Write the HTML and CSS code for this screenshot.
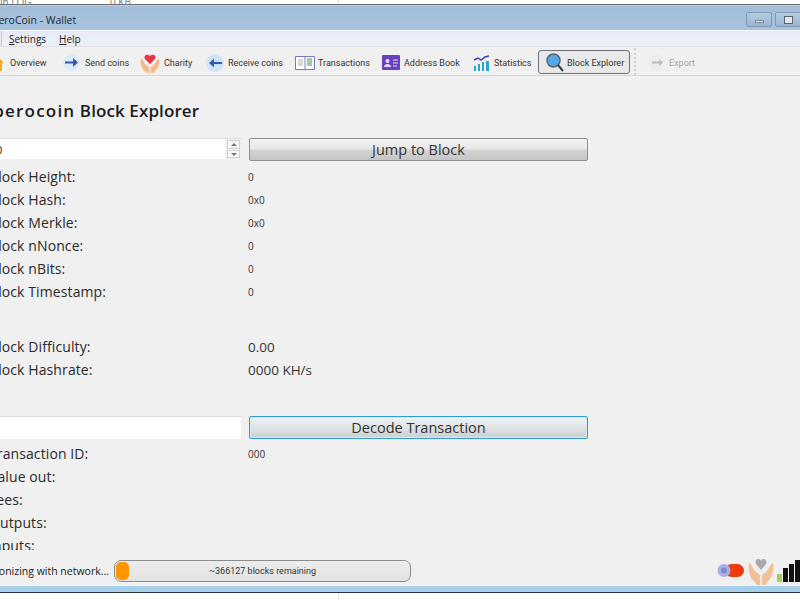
FILE: index.html
```html
<!DOCTYPE html>
<html lang="en">
<head>
<meta charset="utf-8">
<title>Wallet</title>
<link rel="stylesheet" href="styles.css">
</head>
<body>
<div class="desktop">
  <div class="back-strip"><span class="back-name">in LOG</span><span class="back-size">0 KB</span></div>
  <div class="window">
    <div class="titlebar">
      <span class="title">HyperoCoin - Wallet</span>
      <div class="winbtns">
        <span class="winbtn"><i class="min-glyph"></i></span>
        <span class="winbtn"><i class="max-glyph"></i></span>
      </div>
    </div>
    <div class="menubar">
      <span class="menu-file">File</span>
      <span class="menu-item"><u>S</u>ettings</span>
      <span class="menu-item"><u>H</u>elp</span>
    </div>
    <div class="toolbar">
      <span class="tool tool-overview">
        <svg class="ico" width="18" height="20" viewBox="0 0 18 20"><path d="M9 2 17 10h-2v8H3v-8H1z" fill="#f5a623"/><rect x="7" y="12" width="4" height="6" fill="#fbd38a"/></svg>
        Overview</span>
      <span class="tool tool-send">
        <svg class="ico" width="17" height="17" viewBox="0 0 17 17"><circle cx="8.5" cy="8.5" r="8.5" fill="#dcebf8"/><path d="M2 7.5h8V4l5 4.5-5 4.5V9.500H2z" fill="#3c55b5"/></svg>
        Send coins</span>
      <span class="tool tool-charity">
        <svg class="ico" width="20" height="22" viewBox="0 0 20 22"><path d="M10 12 5 7c-2-3 2-6 5-3 3-3 7 0 5 3z" fill="#e8344a"/><path d="M1 7c2 0 3 3 4 5l5 4 5-4c1-2 2-5 4-5 1 4 0 8-3 11l-3 3H7l-3-3C1 15 0 11 1 7z" fill="#f2b98c"/><path d="M10 16v5" stroke="#fff" stroke-width="1"/></svg>
        Charity</span>
      <span class="tool tool-receive">
        <svg class="ico" width="18" height="18" viewBox="0 0 18 18"><circle cx="9" cy="9" r="9" fill="#cfe5f8"/><path d="M16 8H8V4.500L3 9l5 4.500V10h8z" fill="#3c55b5"/></svg>
        Receive coins</span>
      <span class="tool tool-trans">
        <svg class="ico" width="20" height="16" viewBox="0 0 20 16"><path d="M.5 1.500h19v13H.5z" fill="#fff" stroke="#7a78c0"/><path d="M10 1.500v13" stroke="#7a78c0"/><rect x="3" y="4" width="5" height="7" fill="#d8d8d8"/><rect x="12" y="3" width="5" height="8" fill="#a5c9a0"/></svg>
        Transactions</span>
      <span class="tool tool-address">
        <svg class="ico" width="18" height="15" viewBox="0 0 18 15"><rect width="18" height="15" y="0" rx="1" fill="#6a3fc0"/><circle cx="5.500" cy="6" r="2" fill="#e5dcf5"/><path d="M2 12c0-4 7-4 7 0z" fill="#e5dcf5"/><path d="M11 5h5M11 8h5M11 11h4" stroke="#e5dcf5"/></svg>
        Address Book</span>
      <span class="tool tool-stats">
        <svg class="ico" width="17" height="17" viewBox="0 0 17 17"><path d="M1 6 5 4l3 2 4-3 4-1" fill="none" stroke="#3d3fa8" stroke-width="1.500"/><path d="M1 12h2v5H1zM5 10h2v7H5zM9 8h2v9H9zM13 7h3v10h-3z" fill="#2fa6c8"/></svg>
        Statistics</span>
      <span class="tool tool-active">
        <svg class="ico" width="18" height="19" viewBox="0 0 18 19"><circle cx="7.500" cy="7.500" r="6.500" fill="#52a8e8" stroke="#5b6670" stroke-width="1.500"/><path d="m12 12 5 6" stroke="#3a3f46" stroke-width="2"/></svg>
        Block Explorer</span>
      <span class="tool-sep"></span>
      <span class="tool tool-export">
        <svg class="ico" width="17" height="17" viewBox="0 0 17 17"><circle cx="8" cy="8.500" r="8" fill="#ececec"/><path d="M3 7.500h7V5l4 3.500-4 3.500V9.500H3z" fill="#bdbdbd"/></svg>
        Export</span>
    </div>
    <main class="content">
      <h1 class="heading"><span class="heading-coin">Hyperocoin</span> Block Explorer</h1>
      <div class="field-row">
        <div class="spinbox">
          <span class="spin-value">0</span>
          <span class="spin-arrows"><i class="arrow-up"></i><i class="arrow-down"></i></span>
        </div>
        <button class="btn">Jump to Block</button>
      </div>
      <div class="info info-block">
        <span class="lbl">Block Height:</span><span class="val">0</span>
        <span class="lbl">Block Hash:</span><span class="val">0x0</span>
        <span class="lbl">Block Merkle:</span><span class="val">0x0</span>
        <span class="lbl">Block nNonce:</span><span class="val">0</span>
        <span class="lbl">Block nBits:</span><span class="val">0</span>
        <span class="lbl">Block Timestamp:</span><span class="val">0</span>
      </div>
      <div class="info info-rate">
        <span class="lbl">Block Difficulty:</span><span class="val val-big">0.00</span>
        <span class="lbl">Block Hashrate:</span><span class="val val-big">0000 KH/s</span>
      </div>
      <div class="field-row">
        <div class="txinput"></div>
        <button class="btn btn-focus">Decode Transaction</button>
      </div>
      <div class="info">
        <span class="lbl">Transaction ID:</span><span class="val">000</span>
        <span class="lbl">Value out:</span><span class="val"></span>
        <span class="lbl">Fees:</span><span class="val"></span>
        <span class="lbl">Outputs:</span><span class="val"></span>
        <span class="lbl">Inputs:</span><span class="val"></span>
      </div>
    </main>
    <div class="statusbar">
      <span class="sync">Synchronizing with network...</span>
      <div class="progress"><i class="chunk"></i><span class="progress-text">~366127 blocks remaining</span></div>
      <div class="tray">
        <svg width="27" height="13" viewBox="0 0 27 13"><rect x="8" width="19" height="13" rx="6.500" fill="#f03a0c"/><circle cx="7" cy="6.500" r="6.500" fill="#a9aee6"/><circle cx="7" cy="6.500" r="3" fill="#8087d0"/></svg>
        <svg width="26" height="28" viewBox="0 0 26 28"><path d="M13 13 8 7C6 3 11 0 13 4c2-4 7-1 5 3z" fill="#a9a9a9"/><path d="M1 6c3 1 4 6 6 8l5 4v10H9l-5-6C1 18 0 11 1 6zM25 6c-3 1-4 6-6 8l-5 4v10h3l5-6c3-4 4-11 3-16z" fill="#f4c097"/></svg>
        <svg class="signal" width="23" height="22" viewBox="0 0 23 22"><path d="M0 14h5v8H0z" fill="#9ed05e"/><path d="M6 8h5v14H6zM12 4h5v18h-5zM18 0h5v22h-5z" fill="#111"/></svg>
      </div>
    </div>
  </div>
  <div class="bottom-strip"></div>
</div>
</body>
</html>
```
FILE: styles.css
```css
* { box-sizing: border-box; }
html, body { margin: 0; height: 100%; overflow: hidden; background: #fff; }
body { font-family: "Open Sans", "Liberation Sans", sans-serif; color: #222; }

.desktop { width: 800px; height: 600px; overflow: hidden; display: flex; flex-direction: column; }

.back-strip {
  height: 4px; flex: none; overflow: hidden; display: flex; background: #fff;
  font-size: 10px; line-height: 4px; color: #777;
}
.back-name { width: 110px; }
.back-size { width: 229px; border-right: 1px solid #e4e4e4; }

.window {
  flex: none; width: 860px; height: 582px; margin-left: -20px;
  display: flex; flex-direction: column;
  border-top: 1px solid #6e6e6e;
  background: #f0f0f0;
}

.titlebar {
  height: 25px; flex: none; display: flex; align-items: center; justify-content: space-between;
  background: linear-gradient(#a3bed8, #a9c3de);
  border-top: 1px solid #c8ccd2;
}
.title { font-size: 10.500px; color: #1e2a38; margin-top: 4px; margin-left: -1px; }
.winbtns { display: flex; gap: 3px; margin-right: 39px; margin-top: 3px; }
.winbtn {
  width: 26px; height: 15px; border: 1px solid #7f99b4; border-radius: 2px;
  background: linear-gradient(#b4cbe1, #9cb6d0);
  display: flex; align-items: center; justify-content: center;
}
.min-glyph { width: 9px; height: 3px; margin-top: 3px; background: #dfe6ee; border: 1px solid #7d8791; }
.max-glyph { width: 9px; height: 8px; background: #dfe6ee; border: 1px solid #59636e; }

.menubar {
  height: 17px; flex: none; display: flex; align-items: center; font-size: 10px; color: #222;
  border-top: 1px solid #f4f7fc;
  background: linear-gradient(#e8ebf7, #eeeff5);
  border-bottom: 1px solid #dedfe4;
}
.menu-file { width: 22px; height: 15px; color: transparent; background: #e8e8e8; border-right: 1px solid #c8c8d0; margin-right: 7px; }
.menu-item { margin-right: 13px; }

.toolbar {
  height: 29px; flex: none; display: flex; align-items: center;
  font-family: Roboto, "Liberation Sans", sans-serif; font-size: 9px; color: #333;
  background: #f0f0f0; border-bottom: 1px solid #d6d6d6;
}
.tool { display: flex; align-items: center; gap: 5px; height: 24px; margin-top: 1px; padding-top: 2px; white-space: nowrap; }
.ico { flex: none; }
.tool-overview { margin-left: 7px; width: 76px; }
.tool-send { width: 77px; }
.tool-charity { width: 66px; gap: 4px; }
.tool-receive { width: 89px; gap: 4px; }
.tool-trans { width: 87px; gap: 3px; }
.tool-address { width: 91px; gap: 4px; }
.tool-stats { width: 65px; gap: 4px; }
.tool-active {
  width: 92px; padding-left: 7px; gap: 3px; border: 1px solid #6f7478; border-radius: 3px;
  background: #e9e9e9; box-shadow: inset 0 0 1px #bbb;
}
.tool-sep { width: 3px; height: 27px; margin: 0 12px 0 4px; border-left: 2px dotted #cfcfcf; }
.tool-export { color: #a6a6a6; gap: 3px; }

.content {
  flex: 1 1 0; min-height: 0; overflow: hidden; padding: 25px 0 0 9px; display: flex; flex-direction: column;
}
.heading { margin: 0 0 17px -20px; font-size: 17px; line-height: 20px; font-weight: 600; color: #1b1b1b; letter-spacing: .1px; white-space: nowrap; }
.heading-coin { letter-spacing: 1.2px; }
.field-row { display: flex; align-items: flex-start; margin-left: -9px; height: 23px; gap: 8px; flex: none; }
.spinbox {
  width: 261px; height: 21px; display: flex; align-items: center; justify-content: space-between;
  background: linear-gradient(90deg, #fff 245px, #f0f0f0 245px);
  border-top: 1px solid #dcdcdc; font-size: 11px; padding-left: 16px;
}
.spin-arrows { width: 13px; height: 18px; margin-right: 1px; display: flex; flex-direction: column; gap: 1px; }
.spin-arrows i { flex: 1; background: #f8f8f8; border: 1px solid #d0d0d0; position: relative; }
.arrow-up::after, .arrow-down::after {
  content: ""; position: absolute; left: 3px; top: 2px; border: 3px solid transparent;
}
.arrow-up::after { border-bottom-color: #777; border-top: 0; }
.arrow-down::after { border-top-color: #777; border-bottom: 0; }
.btn {
  width: 339px; height: 23px; padding: 0; font: inherit; font-size: 14.500px; color: #333;
  border: 1px solid #8e8e8e; border-radius: 2px;
  background: linear-gradient(#f2f2f2 0%, #e8e8e8 45%, #d2d2d2 55%, #c6c6c6 100%);
}
.btn-focus { border-color: #2f9bd0; box-shadow: inset 0 0 0 1px #d5ecf5; background: linear-gradient(#edf3f6, #dfe3e5 50%, #cbcfd2); }

.info {
  display: grid; grid-template-columns: 259px 1fr; grid-auto-rows: 23px; align-items: center;
  font-size: 14px; color: #2a2a2a; margin-top: 3px; flex: none;
}
.info-block { margin-top: 4px; }
.lbl { letter-spacing: .1px; white-space: nowrap; }
.info-rate { margin-top: 32px; margin-bottom: 35px; }
.val { font-size: 10px; color: #333; }
.val-big { font-size: 13.500px; }
.txinput { width: 261px; height: 23px; background: #fff; border-top: 1px solid #d8d8d8; }

.statusbar {
  height: 36px; padding-top: 5px; flex: none; display: flex; align-items: center; background: #f0f0f0; font-size: 10.500px;
}
.sync { width: 134px; padding-right: 5px; display: flex; justify-content: flex-end; white-space: nowrap; color: #222; flex: none; }
.progress {
  position: relative; width: 297px; height: 22px; flex: none; border: 1px solid #8c8c8c; border-radius: 7px;
  background: linear-gradient(#ececec, #e2e2e2); display: flex; align-items: center; justify-content: center;
  font-family: Roboto, "Liberation Sans", sans-serif; font-size: 9px; color: #333;
}
.chunk { position: absolute; left: 1px; top: 1px; bottom: 1px; width: 13px; border-radius: 5px; background: #ff9600; }
.tray { margin-left: 306px; display: flex; align-items: center; gap: 4px; flex: none; }
.signal { margin-left: -1px; }

.bottom-strip {
  flex: 1; border-top: 6px solid #a9d0ea;
  box-shadow: inset 0 1px 0 #234;
  background: linear-gradient(90deg, #fff 338px, #e6e6e6 338px, #e6e6e6 339px, #fff 339px);
}
```
